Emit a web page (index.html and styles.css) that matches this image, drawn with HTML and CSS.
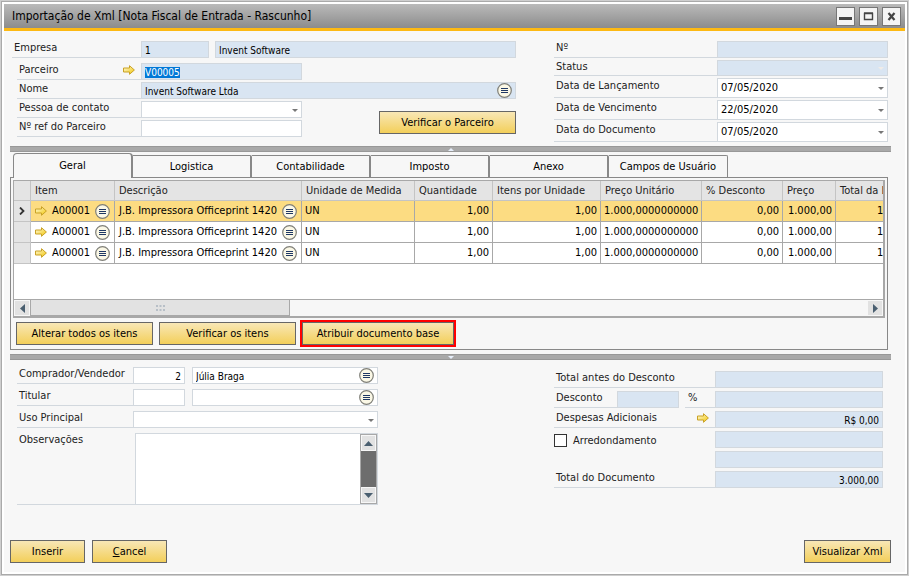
FILE: index.html
```html
<!DOCTYPE html>
<html lang="pt-BR">
<head>
    <meta charset="UTF-8">
    <meta name="viewport" content="width=device-width, initial-scale=1.0">
    <title>Importação de Xml</title>
    <link rel="stylesheet" href="styles.css">
</head>
<body>
    <!-- Ícones -->
    <svg class="sprite" aria-hidden="true">
        <defs>
            <linearGradient id="ouro" x1="0" y1="0" x2="1" y2="1">
                <stop offset="0" stop-color="#fffbe0"/>
                <stop offset="1" stop-color="#f2c500"/>
            </linearGradient>
        </defs>
        <symbol id="seta" viewBox="0 0 12 10">
            <path d="M.5 3h6V.7L11.4 5 6.500 9.300V7h-6z" fill="url(#ouro)" stroke="#c9a227" stroke-width="1"/>
        </symbol>
        <symbol id="lista" viewBox="0 0 15 15">
            <circle cx="7.5" cy="7.5" r="6.8" fill="#fbf8e6" stroke="#7f7f78" stroke-width="1.200"/>
            <path d="M4 5.500h7M4 7.500h7M4 9.500h7" stroke="#1f3864" stroke-width="1"/>
        </symbol>
    </svg>

    <div class="window">
        <header class="titlebar">
            <h1>Importação de Xml [Nota Fiscal de Entrada - Rascunho]</h1>
            <button type="button" class="win-btn" aria-label="Minimizar"><svg viewBox="0 0 17 17"><path d="M2 10.500h13" stroke="#444" stroke-width="3"/></svg></button>
            <button type="button" class="win-btn" aria-label="Maximizar"><svg viewBox="0 0 17 17"><path d="M4.500 5.500h8v6h-8zM4 5h9" fill="none" stroke="#444" stroke-width="1.400"/></svg></button>
            <button type="button" class="win-btn" aria-label="Fechar"><svg viewBox="0 0 17 17"><path d="M5.500 5l6 7M11.500 5l-6 7" stroke="#444" stroke-width="2.200"/></svg></button>
        </header>

        <form class="content">
            <!-- Cabeçalho do documento -->
            <section class="top">
                <div class="partner">
                    <div class="row empresa">
                        <label for="empresa">Empresa</label>
                        <input type="text" id="empresa" class="field locked code" value="1" readonly>
                        <input type="text" class="field locked grow" value="Invent Software" aria-label="Nome da empresa" readonly>
                    </div>
                    <div class="row inner">
                        <label for="parceiro">Parceiro <svg class="seta"><use href="#seta"/></svg></label>
                        <input type="text" id="parceiro" class="field locked medium" value="V00005" autofocus>
                    </div>
                    <div class="row inner">
                        <label for="nome">Nome</label>
                        <span class="lookup grow">
                            <input type="text" id="nome" class="field locked" value="Invent Software Ltda">
                            <button type="button" class="lista" aria-label="Escolher parceiro"><svg><use href="#lista"/></svg></button>
                        </span>
                    </div>
                    <div class="row inner">
                        <label for="contato">Pessoa de contato</label>
                        <span class="drop medium"><select id="contato" class="field"><option></option></select></span>
                    </div>
                    <div class="row inner">
                        <label for="ref">Nº ref do Parceiro</label>
                        <input type="text" id="ref" class="field medium">
                    </div>
                    <button type="button" class="btn check-partner">Verificar o Parceiro</button>
                </div>
                <div class="dates">
                    <div class="row">
                        <label for="numero">Nº</label>
                        <input type="text" id="numero" class="field locked" readonly>
                    </div>
                    <div class="row status">
                        <label for="status">Status</label>
                        <span class="drop off"><select id="status" class="field locked" disabled><option></option></select></span>
                    </div>
                    <div class="row date">
                        <label for="lancamento">Data de Lançamento</label>
                        <span class="drop"><select id="lancamento" class="field"><option>07/05/2020</option></select></span>
                    </div>
                    <div class="row date">
                        <label for="vencimento">Data de Vencimento</label>
                        <span class="drop"><select id="vencimento" class="field"><option>22/05/2020</option></select></span>
                    </div>
                    <div class="row date">
                        <label for="documento">Data do Documento</label>
                        <span class="drop"><select id="documento" class="field"><option>07/05/2020</option></select></span>
                    </div>
                </div>
            </section>

            <div class="splitter up"></div>

            <!-- Abas -->
            <nav class="tabs" role="tablist">
                <button type="button" class="tab active" role="tab" aria-selected="true">Geral</button>
                <button type="button" class="tab" role="tab">Logistica</button>
                <button type="button" class="tab" role="tab">Contabilidade</button>
                <button type="button" class="tab" role="tab">Imposto</button>
                <button type="button" class="tab" role="tab">Anexo</button>
                <button type="button" class="tab" role="tab">Campos de Usuário</button>
            </nav>
            <section class="panel">
                <div class="grid">
                    <div class="grid-body">
                        <table>
                            <colgroup>
                                <col class="c-mark"><col class="c-item"><col class="c-desc"><col class="c-unit"><col class="c-qty">
                                <col class="c-per"><col class="c-cost"><col class="c-disc"><col class="c-price"><col class="c-total">
                            </colgroup>
                            <thead>
                                <tr>
                                    <th></th><th>Item</th><th>Descrição</th><th>Unidade de Medida</th><th>Quantidade</th>
                                    <th>Itens por Unidade</th><th>Preço Unitário</th><th>% Desconto</th><th>Preço</th><th>Total da Linha</th>
                                </tr>
                            </thead>
                            <tbody>
                                <tr class="selected">
                                    <td class="mark"><svg class="chevron" viewBox="0 0 6 8"><path d="M1 .5l3.500 3.500L1 7.500" fill="none" stroke="#333" stroke-width="1.800"/></svg></td>
                                    <td><div class="cell"><svg class="seta"><use href="#seta"/></svg>A00001<button type="button" class="lista" aria-label="Escolher item"><svg><use href="#lista"/></svg></button></div></td>
                                    <td><div class="cell">J.B. Impressora Officeprint 1420<button type="button" class="lista" aria-label="Escolher descrição"><svg><use href="#lista"/></svg></button></div></td>
                                    <td>UN</td><td class="num">1,00</td><td class="num">1,00</td><td class="num">1.000,0000000000</td>
                                    <td class="num">0,00</td><td class="num">1.000,00</td><td class="num">1.000,00</td>
                                </tr>
                                <tr>
                                    <td class="mark"></td>
                                    <td><div class="cell"><svg class="seta"><use href="#seta"/></svg>A00001<button type="button" class="lista" aria-label="Escolher item"><svg><use href="#lista"/></svg></button></div></td>
                                    <td><div class="cell">J.B. Impressora Officeprint 1420<button type="button" class="lista" aria-label="Escolher descrição"><svg><use href="#lista"/></svg></button></div></td>
                                    <td>UN</td><td class="num">1,00</td><td class="num">1,00</td><td class="num">1.000,0000000000</td>
                                    <td class="num">0,00</td><td class="num">1.000,00</td><td class="num">1.000,00</td>
                                </tr>
                                <tr>
                                    <td class="mark"></td>
                                    <td><div class="cell"><svg class="seta"><use href="#seta"/></svg>A00001<button type="button" class="lista" aria-label="Escolher item"><svg><use href="#lista"/></svg></button></div></td>
                                    <td><div class="cell">J.B. Impressora Officeprint 1420<button type="button" class="lista" aria-label="Escolher descrição"><svg><use href="#lista"/></svg></button></div></td>
                                    <td>UN</td><td class="num">1,00</td><td class="num">1,00</td><td class="num">1.000,0000000000</td>
                                    <td class="num">0,00</td><td class="num">1.000,00</td><td class="num">1.000,00</td>
                                </tr>
                            </tbody>
                        </table>
                    </div>
                    <div class="hscroll">
                        <button type="button" class="scroll-btn" aria-label="Rolar para a esquerda"><svg viewBox="0 0 5 9"><path d="M5 0v9L0 4.500z"/></svg></button>
                        <div class="thumb"><svg viewBox="0 0 9 6"><path d="M0 1h2M3.500 1h2M7 1h2M0 5h2M3.500 5h2M7 5h2" stroke="#a9b4bf" stroke-width="1.500"/></svg></div>
                        <button type="button" class="scroll-btn end" aria-label="Rolar para a direita"><svg viewBox="0 0 5 9"><path d="M0 0v9l5-4.500z"/></svg></button>
                    </div>
                </div>
                <div class="actions">
                    <button type="button" class="btn">Alterar todos os itens</button>
                    <button type="button" class="btn">Verificar os itens</button>
                    <button type="button" class="btn highlight">Atribuir documento base</button>
                </div>
            </section>

            <div class="splitter down"></div>

            <!-- Rodapé do documento -->
            <section class="bottom">
                <div class="buyer">
                    <div class="row">
                        <label for="comprador">Comprador/Vendedor</label>
                        <input type="text" id="comprador" class="field code right" value="2">
                        <span class="lookup grow">
                            <input type="text" class="field" value="Júlia Braga" aria-label="Nome do comprador">
                            <button type="button" class="lista" aria-label="Escolher comprador"><svg><use href="#lista"/></svg></button>
                        </span>
                    </div>
                    <div class="row">
                        <label for="titular">Titular</label>
                        <input type="text" id="titular" class="field code">
                        <span class="lookup grow">
                            <input type="text" class="field" aria-label="Nome do titular">
                            <button type="button" class="lista" aria-label="Escolher titular"><svg><use href="#lista"/></svg></button>
                        </span>
                    </div>
                    <div class="row">
                        <label for="uso">Uso Principal</label>
                        <span class="drop grow"><select id="uso" class="field"><option></option></select></span>
                    </div>
                    <div class="row notes">
                        <label for="obs">Observações</label>
                        <div class="notes-box">
                            <textarea id="obs"></textarea>
                            <div class="vscroll">
                                <button type="button" class="scroll-btn" aria-label="Rolar para cima"><svg viewBox="0 0 9 5"><path d="M0 5h9L4.500 0z"/></svg></button>
                                <button type="button" class="scroll-btn" aria-label="Rolar para baixo"><svg viewBox="0 0 9 5"><path d="M0 0h9L4.500 5z"/></svg></button>
                            </div>
                        </div>
                    </div>
                </div>
                <div class="totals">
                    <div class="row">
                        <label for="antes">Total antes do Desconto</label>
                        <input type="text" id="antes" class="field locked" readonly>
                    </div>
                    <div class="row">
                        <label for="desconto" class="short">Desconto</label>
                        <input type="text" id="desconto" class="field locked percent" readonly>
                        <label for="valor" class="sign">%</label>
                        <input type="text" id="valor" class="field locked" readonly>
                    </div>
                    <div class="row">
                        <label for="despesas">Despesas Adicionais <svg class="seta"><use href="#seta"/></svg></label>
                        <input type="text" id="despesas" class="field locked right" value="R$ 0,00" readonly>
                    </div>
                    <div class="row">
                        <label for="arredondar" class="plain"><input type="checkbox" id="arredondar"> Arredondamento</label>
                        <input type="text" class="field locked" aria-label="Valor do arredondamento" readonly>
                    </div>
                    <div class="row">
                        <span class="plain"></span>
                        <input type="text" class="field locked" aria-label="Imposto" readonly>
                    </div>
                    <div class="row">
                        <label for="total">Total do Documento</label>
                        <input type="text" id="total" class="field locked right" value="3.000,00" readonly>
                    </div>
                </div>
            </section>

            <footer class="footer">
                <button type="button" class="btn">Inserir</button>
                <button type="button" class="btn"><u>C</u>ancel</button>
                <button type="button" class="btn view">Visualizar Xml</button>
            </footer>
        </form>
    </div>

    <script>
        // O parceiro já abre selecionado
        const parceiro = document.getElementById('parceiro');
        parceiro.focus();
        parceiro.select();
    </script>
</body>
</html>
```
FILE: styles.css
```css
* {
    box-sizing: border-box;
}
body {
    margin: 0;
    padding: 1px;
    background-color: #cfcfcf;
    color: #222;
    font-family: "DejaVu Sans Condensed", "DejaVu Sans", sans-serif;
    font-size: 11px;
    line-height: 14px;
}
input, select, textarea, button {
    margin: 0;
    padding: 0;
    border: none;
    border-radius: 0;
    outline: none;
    color: #000;
    font-family: inherit;
    font-size: 11px;
    line-height: 14px;
}
.sprite {
    position: absolute;
    width: 0;
    height: 0;
}
.window {
    display: flex;
    flex-direction: column;
    min-height: calc(100vh - 2px);
    border: 1px solid #aaa;
    box-shadow: inset 0 0 0 2px #fff;
    padding: 2px;
    background-color: #f7f7f7;
}
.titlebar {
    display: flex;
    align-items: center;
    gap: 4px;
    height: 27px;
    padding: 0 4px 0 8px;
    background: linear-gradient(#bababa, #8c8c8c);
    border-bottom: 3px solid #fdb913;
}
.titlebar h1 {
    flex: 1;
    margin: 0;
    font-size: 12px;
    font-weight: normal;
    color: #000;
}
.win-btn {
    width: 19px;
    height: 19px;
    background-color: #f4f4f4;
    border: 1px solid #777;
}
.win-btn svg {
    display: block;
    width: 17px;
    height: 17px;
}
.content {
    flex: 1;
    display: flex;
    flex-direction: column;
    padding: 10px 14px 9px 6px;
}

/* Campos */
.row {
    display: flex;
    height: 17px;
}
.row label {
    display: flex;
    align-items: center;
    justify-content: space-between;
    padding: 0 6px 2px 2px;
    border-bottom: 1px solid #d2d8de;
    white-space: nowrap;
}
.field {
    width: 100%;
    height: 100%;
    min-width: 0;
    padding: 2px 3px 0;
    background-color: #fff;
    border: 1px solid #d2d8de;
    font-size: 10px;
    line-height: 12px;
}
.locked {
    background-color: #d9e5f2;
}
.right {
    text-align: right;
}
.grow {
    flex: 1;
}
.lookup, .drop {
    position: relative;
    display: block;
    height: 100%;
}
.lookup .field, .drop .field {
    display: block;
}
.lookup .lista {
    position: absolute;
    top: 1px;
    right: 4px;
}
.drop select {
    appearance: none;
    opacity: 1;
    padding: 0 3px;
    font-size: 11px;
}
.drop::after {
    content: "";
    position: absolute;
    top: 50%;
    right: 4px;
    margin-top: -1px;
    border: 3px solid transparent;
    border-top-color: #777;
    border-bottom: none;
}
.off::after {
    border-top-color: #f0ece8;
}
.lista {
    width: 15px;
    height: 15px;
    background: none;
}
.lista svg {
    display: block;
    width: 15px;
    height: 15px;
}
.seta {
    flex: none;
    width: 12px;
    height: 10px;
}
#parceiro::selection {
    background-color: #0078d7;
    color: #fff;
}

/* Botões */
.btn {
    height: 23px;
    background: linear-gradient(#f8e7b6, #f3cf5a);
    border: 1px solid #666;
    white-space: nowrap;
}

/* Cabeçalho do documento */
.top {
    display: flex;
    gap: 38px;
    padding: 0 3px 0 2px;
}
.partner {
    position: relative;
    flex: 1;
    display: flex;
    flex-direction: column;
    gap: 2px;
}
.partner label {
    width: 129px;
}
.partner .empresa {
    margin-bottom: 3px;
}
.partner .code {
    width: 68px;
    margin-right: 6px;
}
.partner .inner {
    padding-left: 5px;
}
.partner .inner label {
    width: 124px;
}
.medium {
    width: 161px;
}
.check-partner {
    position: absolute;
    right: 0;
    bottom: 8px;
    width: 137px;
}
.dates {
    display: flex;
    flex-direction: column;
    gap: 2px;
    width: 334px;
}
.dates label {
    flex: none;
    width: 163px;
}
.dates .drop {
    flex: 1;
}
.dates .status {
    height: 16px;
}
.dates .date {
    height: 20px;
}
.dates .date label {
    padding-bottom: 4px;
}

.splitter {
    position: relative;
    height: 6px;
    margin-top: 4px;
    background-color: #a9a9a9;
    border-top: 1px solid #989898;
    border-bottom: 1px solid #989898;
}
.splitter::after {
    content: "";
    position: absolute;
    left: 50%;
    top: 1px;
    margin-left: -3px;
    border: 3px solid transparent;
}
.up::after {
    border-top: none;
    border-bottom-color: #e6eefa;
}
.down::after {
    border-bottom: none;
    border-top-color: #e6eefa;
}

/* Abas */
.tabs {
    display: flex;
    align-items: flex-end;
    height: 25px;
    margin-top: 1px;
    padding-left: 3px;
}
.tab {
    width: 119px;
    height: 22px;
    margin-bottom: 1px;
    background-color: #f7f7f7;
    border-top: 1px solid #888;
    border-right: 2px solid #888;
    border-top-right-radius: 2px;
}
.tab:last-child {
    border-right-width: 1px;
}
.tab.active {
    position: relative;
    width: 120px;
    height: 25px;
    margin-bottom: 0;
    border-left: 1px solid #888;
    border-radius: 4px 4px 0 0;
}
.panel {
    margin: -1px 3px 0 0;
    padding: 2px;
    border: 1px solid #888;
}
.grid {
    border: 1px solid #a8a8a8;
    border-right-width: 2px;
    border-bottom-width: 2px;
}
.grid-body {
    height: 118px;
    overflow: hidden;
    background-color: #fff;
}
.grid table {
    width: 911px;
    table-layout: fixed;
    border-collapse: separate;
    border-spacing: 0;
}
.c-mark { width: 17px; }
.c-item { width: 84px; }
.c-desc { width: 187px; }
.c-unit { width: 113px; }
.c-qty { width: 78px; }
.c-per { width: 108px; }
.c-cost { width: 101px; }
.c-disc { width: 81px; }
.c-price { width: 53px; }
.c-total { width: 89px; }
.grid th {
    height: 20px;
    padding: 0 4px;
    background-color: #e4e4e4;
    border-right: 1px solid #c4c4c4;
    border-bottom: 1px solid #c4c4c4;
    font-weight: normal;
    text-align: left;
    white-space: nowrap;
    overflow: hidden;
}
.grid td {
    height: 21px;
    padding: 0 3px;
    border-right: 1px solid #a8a8a8;
    border-bottom: 1px solid #a8a8a8;
    color: #000;
    white-space: nowrap;
}
.grid .num {
    text-align: right;
}
.grid .mark {
    padding: 0 0 0 5px;
    background-color: #e4e4e4;
    border-color: #c4c4c4;
}
.grid .selected td:not(.mark) {
    background-color: #fcdc82;
}
.chevron {
    display: block;
    width: 6px;
    height: 8px;
}
.cell {
    display: flex;
    align-items: center;
    justify-content: space-between;
    padding: 0 1px;
}
.hscroll {
    display: flex;
    height: 17px;
    border-top: 1px solid #a8a8a8;
    background-color: #f7f7f7;
}
.scroll-btn {
    display: flex;
    align-items: center;
    justify-content: center;
    width: 16px;
    height: 16px;
    background-color: #e2e2e2;
    border: 1px solid #f7f7f7;
}
.scroll-btn path {
    fill: #4a5f70;
}
.hscroll .scroll-btn svg {
    width: 5px;
    height: 9px;
}
.hscroll .end {
    margin-left: auto;
}
.thumb {
    display: flex;
    align-items: center;
    justify-content: center;
    width: 260px;
    background-color: #e2e2e2;
    border: 1px solid #a8a8a8;
    border-top: none;
}
.thumb svg {
    width: 9px;
    height: 6px;
}
.actions {
    display: flex;
    gap: 6px;
    padding: 4px 3px 2px;
}
.actions .btn {
    width: 137px;
}
.actions .highlight {
    width: 152px;
    outline: 2px solid #f00;
}

/* Rodapé do documento */
.bottom {
    display: flex;
    justify-content: space-between;
    padding: 7px 8px 0 7px;
}
.buyer {
    display: flex;
    flex-direction: column;
    gap: 5px;
    width: 361px;
}
.buyer label {
    width: 116px;
}
.buyer .code {
    width: 52px;
    margin-right: 7px;
}
.buyer .notes {
    height: 72px;
}
.buyer .notes label {
    width: 118px;
    align-items: flex-start;
}
.notes-box {
    display: flex;
    flex: 1;
    border: 1px solid #d2d8de;
}
.notes-box textarea {
    flex: 1;
    min-width: 0;
    resize: none;
}
.vscroll {
    display: flex;
    flex-direction: column;
    justify-content: space-between;
    width: 17px;
    background-color: #6d6d6d;
    border: 1px solid #a8a8a8;
}
.vscroll .scroll-btn {
    width: 15px;
}
.vscroll svg {
    width: 9px;
    height: 5px;
}
.totals {
    display: flex;
    flex-direction: column;
    gap: 3px;
    width: 329px;
    padding-top: 4px;
}
.totals label, .totals .plain {
    flex: none;
    width: 161px;
}
.totals .short {
    width: 63px;
}
.totals .percent {
    flex: none;
    width: 62px;
    margin-right: 6px;
}
.totals .sign {
    width: 30px;
    padding-left: 3px;
}
.totals .plain {
    justify-content: flex-start;
    gap: 6px;
    padding: 2px 0 0;
    border: none;
}
.totals input[type="checkbox"] {
    appearance: none;
    width: 13px;
    height: 13px;
    background-color: #fff;
    border: 1px solid #333;
}
.totals input[type="checkbox"]:checked {
    background-color: #f3cf5a;
}

.footer {
    display: flex;
    gap: 7px;
    margin-top: auto;
}
.footer .btn {
    width: 75px;
}
.footer .view {
    width: 87px;
    margin-left: auto;
}
```
